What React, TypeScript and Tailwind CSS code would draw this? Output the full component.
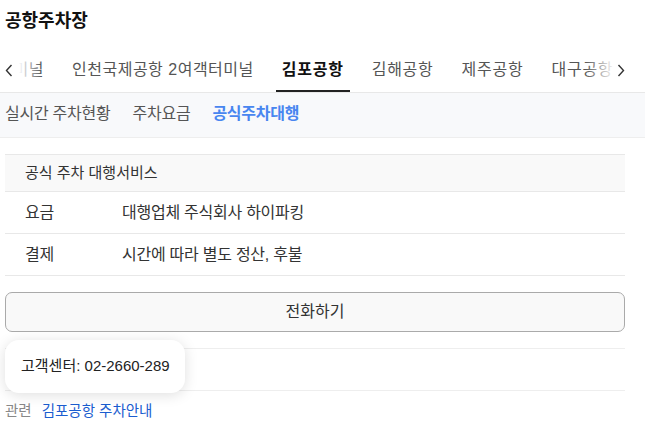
import React from "react";

const tabs = ["인천국제공항 2여객터미널", "김포공항", "김해공항", "제주공항", "대구공항"];
const subTabs = ["실시간 주차현황", "주차요금", "공식주차대행"];

function Chevron({ dir }: { dir: "left" | "right" }) {
  return (
    <svg width="8" height="13" viewBox="0 0 8 13" fill="none">
      <polyline
        points={dir === "left" ? "6.5,1 1.5,6.5 6.5,12" : "1.5,1 6.5,6.5 1.5,12"}
        stroke="#333"
        strokeWidth="1.4"
      />
    </svg>
  );
}

function Tab({ label, active }: { label: string; active?: boolean }) {
  const wide = label.length > 8;
  return (
    <div
      className={
        (active
          ? "border-[#222] font-bold text-[#111] "
          : "border-transparent text-[#555] ") +
        (wide ? "tracking-[0.5px] " : "tracking-[0.75px] ") +
        "flex h-full shrink-0 items-center border-b-2 px-[6px] pt-[4px] text-[16px]"
      }
    >
      {label}
    </div>
  );
}

export default function App() {
  return (
    <div className="h-[428px] w-[645px] overflow-hidden bg-white font-['Liberation_Sans','Noto_Sans_CJK_KR',sans-serif] text-[#333]">
      {/* Title */}
      <h1 className="h-[45px] pl-[5px] pt-[8px] text-[18px] font-bold leading-[26px] text-[#111]">공항주차장</h1>

      {/* Airport tabs */}
      <div className="relative border-b border-[#e8e8e8]">
        <div className="flex h-[47px] gap-[16px] overflow-hidden whitespace-nowrap">
          <div className="flex w-[50px] shrink-0 justify-end overflow-hidden">
            <Tab label="인천국제공항 1여객터미널" />
          </div>
          {tabs.map((t) => (
            <Tab key={t} label={t} active={t === "김포공항"} />
          ))}
        </div>
        <div className="absolute left-0 top-0 flex h-[47px] w-[42px] items-center bg-gradient-to-r from-white from-45% to-transparent pl-[5px] pt-[3px]">
          <Chevron dir="left" />
        </div>
        <div className="absolute right-0 top-0 flex h-[47px] w-[60px] items-center bg-gradient-to-l from-white from-50% to-transparent pl-[32px] pt-[3px]">
          <Chevron dir="right" />
        </div>
      </div>

      {/* Sub tabs */}
      <div className="flex h-[45px] items-center gap-[22px] border-b border-[#eee] bg-[#f8f9fb] pb-[2px] pl-[5px] text-[16px] tracking-[-0.25px]">
        {subTabs.map((s) => (
          <span key={s} className={s === "공식주차대행" ? "font-bold text-[#4886f0]" : "text-[#555]"}>
            {s}
          </span>
        ))}
      </div>

      <div className="ml-[5px] w-[620px]">
        {/* Table */}
        <div className="mt-[16px]">
          <div className="flex h-[38px] items-center border-y border-[#e8e8e8] bg-[#f9f9f9] pl-[20px] text-[15px] text-[#333]">
            공식 주차 대행서비스
          </div>
          <div className="flex h-[42px] items-center border-b border-[#e8e8e8] text-[16px] tracking-[-0.25px]">
            <span className="w-[117px] pl-[20px]">요금</span>
            <span>대행업체 주식회사 하이파킹</span>
          </div>
          <div className="flex h-[42px] items-center border-b border-[#e8e8e8] text-[16px] tracking-[-0.25px]">
            <span className="w-[117px] pl-[20px]">결제</span>
            <span>시간에 따라 별도 정산, 후불</span>
          </div>
        </div>

        {/* Call button */}
        <button className="mt-[16px] flex h-[40px] w-full items-center justify-center rounded-[7px] border border-[#aaa] bg-[#f9f9f9] text-[16px] text-[#333]">
          전화하기
        </button>

        <div className="relative mt-[16px] h-[43px] border-y border-[#eee]">
          <div className="absolute left-0 top-[-9px] flex h-[53px] w-[180px] items-center rounded-[14px] bg-white pl-[16px] text-[15px] text-[#222] shadow-[0_2px_14px_rgba(0,0,0,0.13)]">
            고객센터: 02-2660-289
          </div>
        </div>

        <div className="flex items-center gap-[10px] pt-[10px] text-[14.5px] leading-[20px]">
          <span className="text-[#888]">관련</span>
          <span className="text-[#1b5dcf]">김포공항 주차안내</span>
        </div>
      </div>
    </div>
  );
}
